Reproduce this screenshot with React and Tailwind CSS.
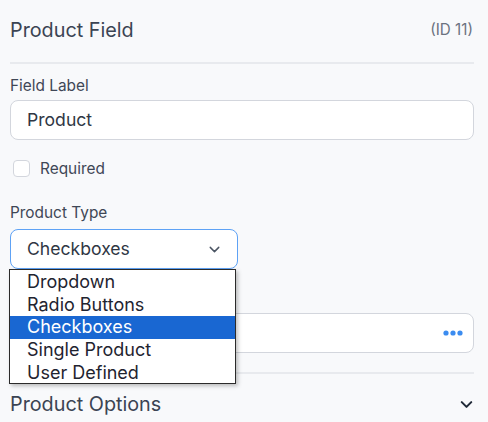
import React from "react";

function Chevron({ className, strokeWidth = 2 }) {
  return (
    <svg viewBox="0 0 24 24" className={className} fill="none" stroke="currentColor" strokeWidth={strokeWidth} strokeLinecap="round" strokeLinejoin="round">
      <path d="m6 9 6 6 6-6" />
    </svg>
  );
}

export default function App() {
  const options = ["Dropdown", "Radio Buttons", "Checkboxes", "Single Product", "User Defined"];
  return (
    <div className="relative w-[488px] h-[422px] overflow-hidden bg-[#f8f9fb] text-[#374151] font-[370]" style={{ fontFamily: "Inter, 'Noto Sans', sans-serif" }}>
      <div className="pl-[10px] pr-[14px] pt-[18px]">
        <div className="flex items-center justify-between h-6">
          <span className="text-[19.8px] leading-6 text-[#3b4453]">Product Field</span>
          <span className="text-[15.2px] leading-5 text-[#6b7280] pr-[1px]">(ID 11)</span>
        </div>
        <div className="mt-[20px] h-[2px] bg-[#e8eaee]" />
        <div className="mt-[12px] text-[15.4px] leading-5 text-[#3f4756]">Field Label</div>
        <div className="mt-[4px] h-10 w-[464px] rounded-[8px] border border-[#d3d6dd] bg-white flex items-center pl-[16px] text-[17.6px] text-[#2f3744]">
          Product
        </div>
        <div className="mt-[20px] flex items-center h-[17px]">
          <div className="ml-[3px] w-[17px] h-[17px] rounded-[4px] border border-[#d3d6dd] bg-white" />
          <span className="ml-[10px] text-[15.4px] leading-5 text-[#3f4756]">Required</span>
        </div>
        <div className="mt-[26px] text-[15.4px] leading-5 text-[#3f4756]">Product Type</div>
        <div className="mt-[6px] h-10 w-[228px] rounded-[8px] border border-[#5ea2f5] bg-white flex items-center justify-between pl-[16px] pr-[14px] text-[17.6px] text-[#2f3744]">
          <span>Checkboxes</span>
          <Chevron className="w-[17px] h-[17px] text-[#4b5563]" />
        </div>
        <div className="mt-[19px] h-5" />
        <div className="mt-[5px] h-10 w-[464px] rounded-[8px] border border-[#d3d6dd] bg-white flex items-center justify-end pr-[10px]">
          <svg viewBox="0 0 20 6" className="w-[20px] h-[6px]" fill="#3b8cf0">
            <circle cx="3" cy="3" r="2.6" />
            <circle cx="10" cy="3" r="2.6" />
            <circle cx="17" cy="3" r="2.6" />
          </svg>
        </div>
        <div className="mt-[19px] h-[2px] bg-[#e8eaee]" />
        <div className="mt-[18px] flex items-center justify-between h-6">
          <span className="text-[19.8px] leading-6 text-[#3b4453]">Product Options</span>
          <Chevron className="w-[19px] h-[19px] text-[#1f2937] mr-[-2px]" strokeWidth={2.6} />
        </div>
      </div>

      <div className="absolute left-[9px] top-[269px] w-[227px] h-[115px] border border-[#2b2b2b] bg-white shadow-[2px_2px_4px_rgba(0,0,0,0.25)] py-[1px]">
        {options.map((o) => (
          <div
            key={o}
            className={
              "h-[22.6px] pl-[17px] flex items-center text-[18px] leading-none " +
              (o === "Checkboxes" ? "bg-[#1967d2] text-white" : "text-[#1f2430]")
            }
          >
            {o}
          </div>
        ))}
      </div>
    </div>
  );
}
